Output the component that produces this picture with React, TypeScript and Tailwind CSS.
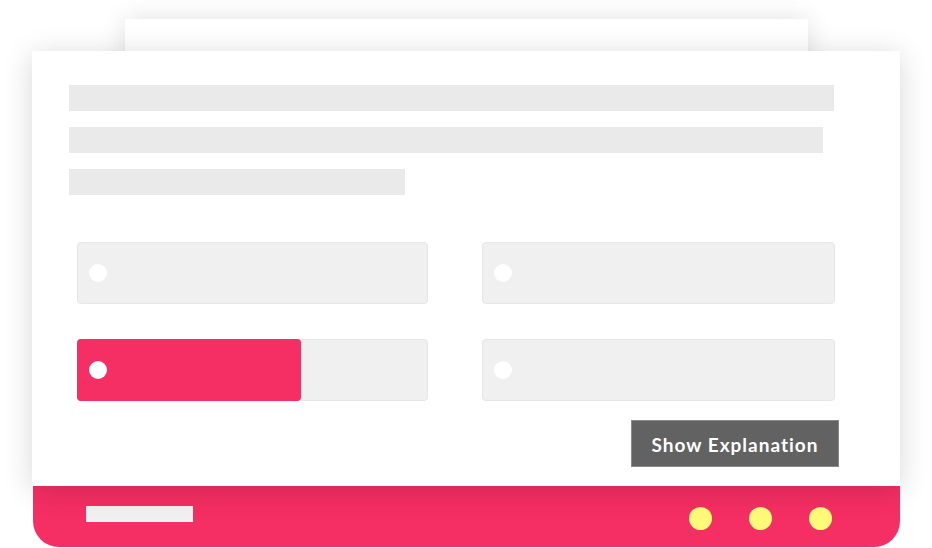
import React from 'react';

const Option = ({ fill }: { fill?: number }) => (
  <div className="relative h-[62px] rounded-[4px] border border-[#e6e6e6] bg-[#f0f0f0]">
    {fill !== undefined && (
      <div
        className="absolute -left-px -top-px -bottom-px rounded-[4px] bg-[#f52e63]"
        style={{ width: fill }}
      />
    )}
    <div className="relative flex h-full items-center pl-[11px]">
      <span className="h-[18px] w-[18px] rounded-full bg-white" />
    </div>
  </div>
);

export default function App() {
  return (
    <div className="relative h-[548px] w-[932px] overflow-hidden bg-white font-['Lato','Liberation_Sans',sans-serif]">
      {/* back sheet */}
      <div className="absolute left-[125px] top-[19px] h-[80px] w-[683px] bg-white shadow-[0_0_24px_rgba(0,0,0,0.12)]" />

      <div className="absolute left-[32px] top-[51px] flex w-[868px] flex-col">
        {/* main card */}
        <div className="relative z-10 h-[435px] bg-white px-[37px] pt-[34px] shadow-[0_4px_28px_rgba(0,0,0,0.16)]">
          <div className="flex flex-col gap-[16px]">
            <div className="h-[26px] w-[765px] bg-[#eaeaea]" />
            <div className="h-[26px] w-[754px] bg-[#eaeaea]" />
            <div className="h-[26px] w-[336px] bg-[#eaeaea]" />
          </div>

          <div className="ml-[8px] mt-[47px] grid w-[758px] grid-cols-[351px_353px] gap-x-[54px] gap-y-[35px]">
            <Option />
            <Option />
            <Option fill={224} />
            <Option />
          </div>

          <div className="mt-[19px] flex justify-end pr-[24px]">
            <button className="flex h-[47px] w-[208px] items-center justify-center border border-[#8a8a8a] bg-[#626262] pt-[3px] text-[19px] font-bold tracking-[1px] text-white">
              Show Explanation
            </button>
          </div>
        </div>

        {/* pink base */}
        <div className="relative -mt-[26px] ml-px flex h-[87px] items-start justify-between rounded-[26px] bg-[#f52e63] pl-[53px] pr-[68px] pt-[46px]">
          <div className="h-[16px] w-[107px] bg-[#f0f0f0]" />
          <div className="mt-[1px] flex gap-[37px]">
            <span className="h-[23px] w-[23px] rounded-full bg-[#fffb79]" />
            <span className="h-[23px] w-[23px] rounded-full bg-[#fffb79]" />
            <span className="h-[23px] w-[23px] rounded-full bg-[#fffb79]" />
          </div>
        </div>
      </div>
    </div>
  );
}
